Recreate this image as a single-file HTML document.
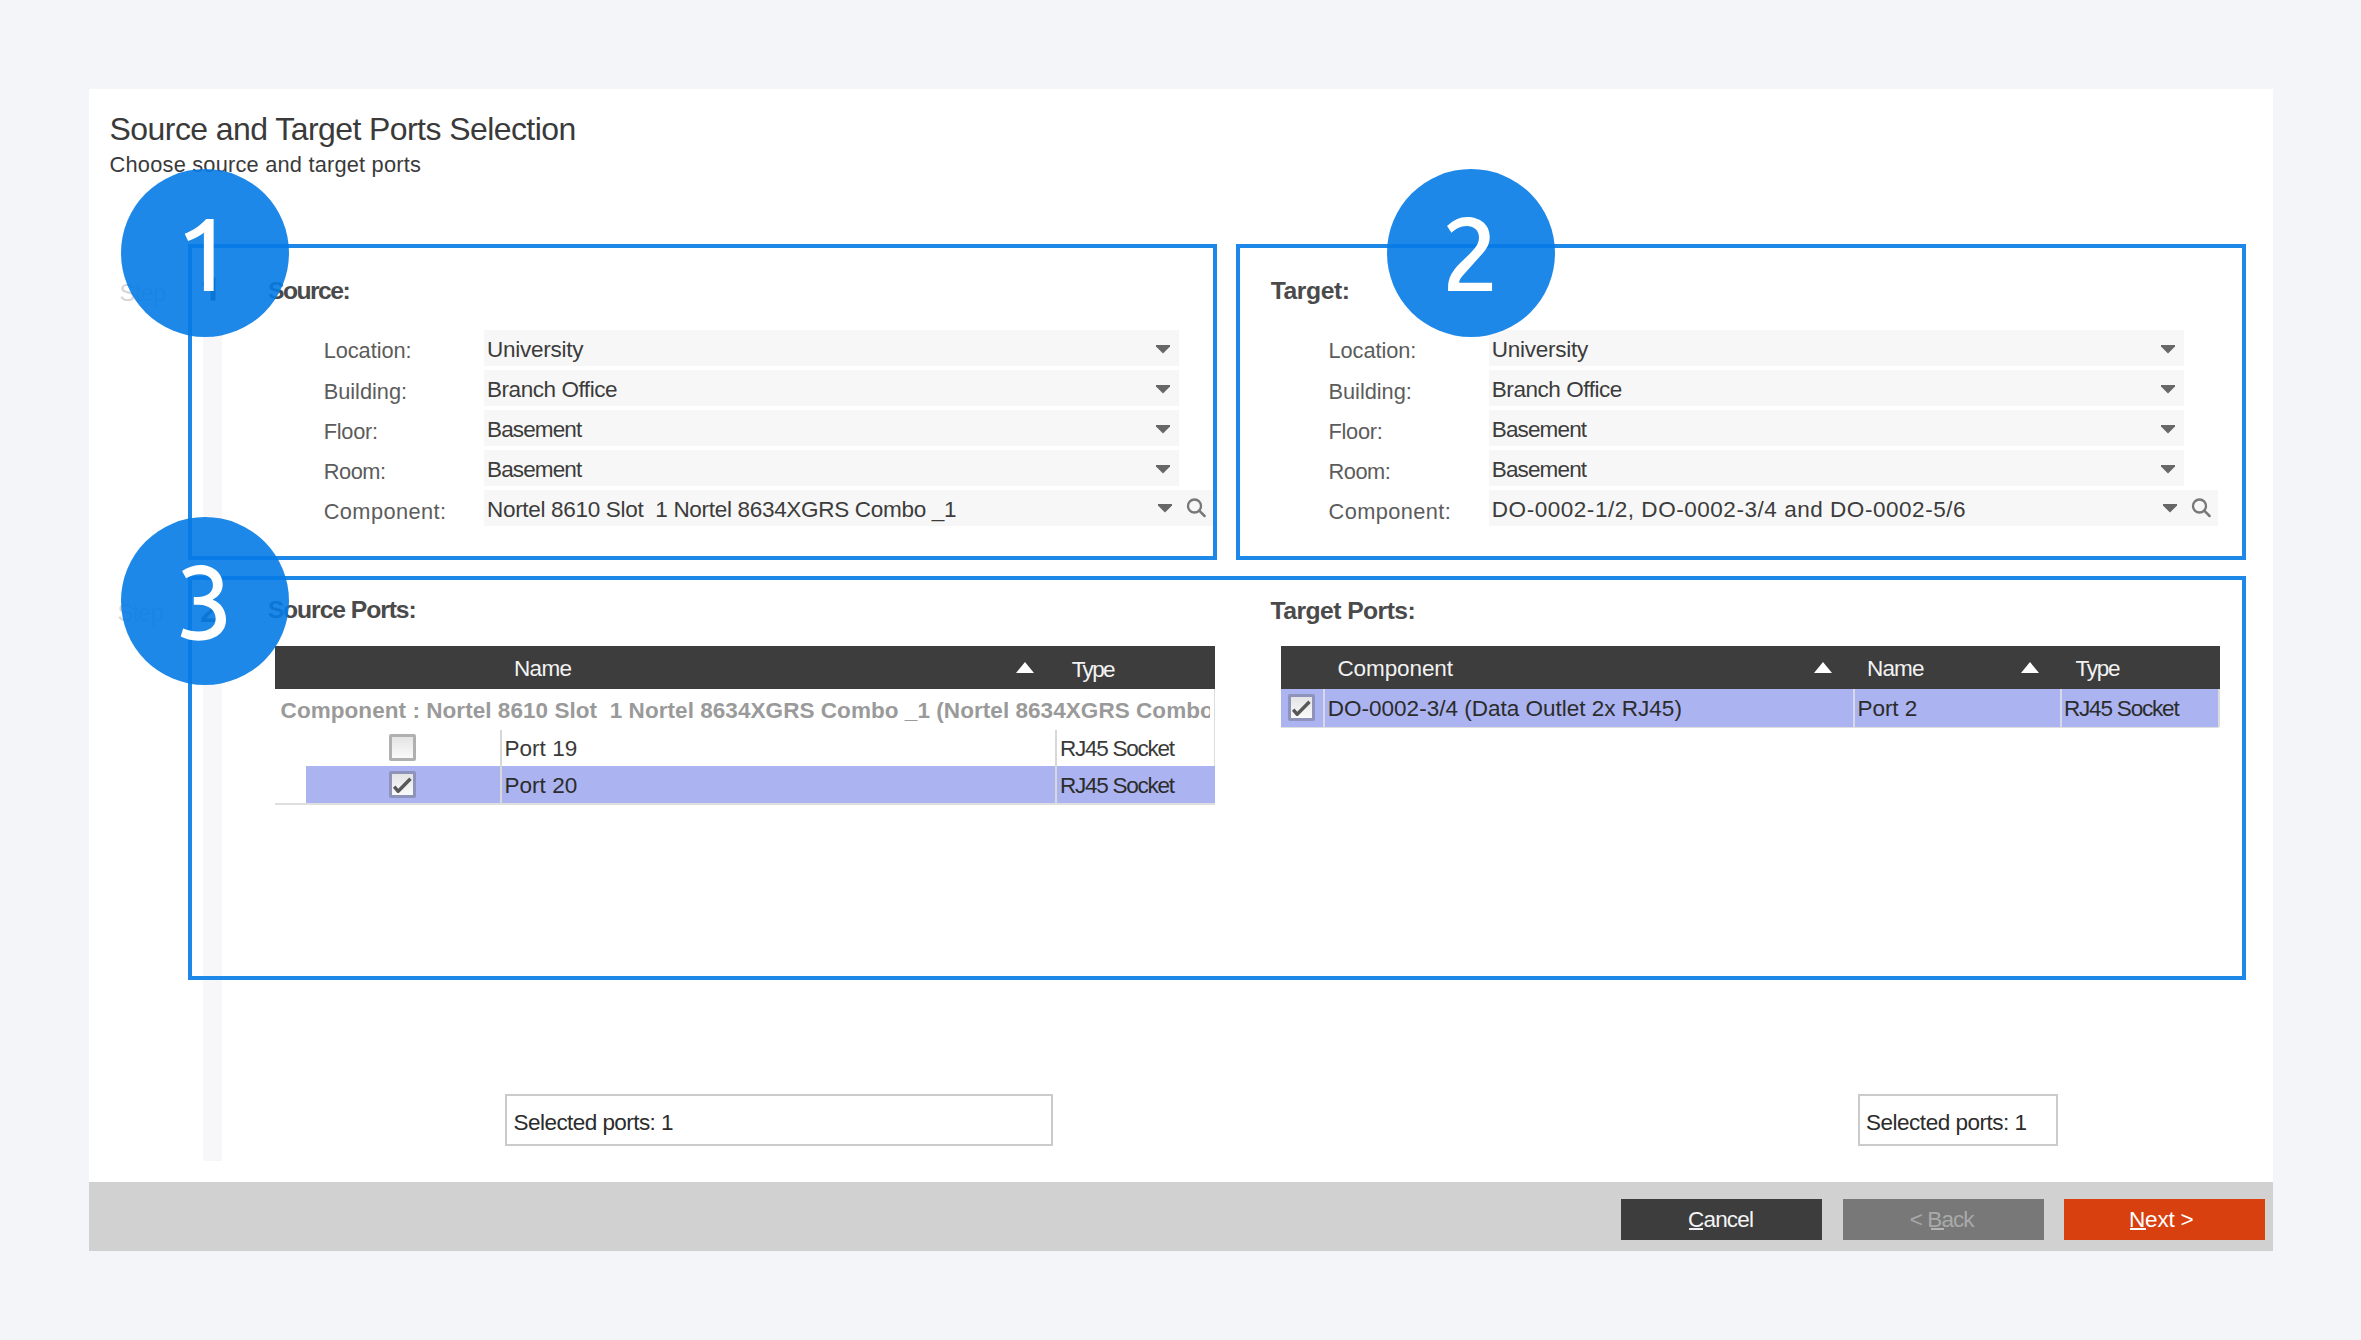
<!DOCTYPE html>
<html><head><meta charset="utf-8"><style>
html,body{margin:0;padding:0;}
body{width:2361px;height:1340px;background:#f4f5f9;position:relative;overflow:hidden;font-family:"Liberation Sans",sans-serif;}
.a{position:absolute;}
.t{position:absolute;white-space:pre;line-height:1;font-family:"Liberation Sans",sans-serif;}
.dd{position:absolute;background:#f7f7f7;height:36px;}
.cb{position:absolute;width:21px;height:21px;border:3px solid #b0b0b0;border-radius:2px;background:linear-gradient(#e4e4e4,#fafafa);}
.box{position:absolute;border:4px solid #1e88e8;box-sizing:border-box;}
.circ{position:absolute;width:168px;height:168px;border-radius:50%;background:rgba(5,123,229,0.9);}
.btn{position:absolute;top:1199px;height:41px;width:201px;}
</style></head><body>
<div class="a" style="left:89px;top:89px;width:2184px;height:1162px;background:#fff;"></div>
<div class="a" style="left:89px;top:1182px;width:2184px;height:69px;background:#d1d1d1;"></div>
<div class="a" style="left:203px;top:265px;width:19px;height:896px;background:#f7f7f9;"></div>
<div class="dd" style="left:483.5px;top:330px;width:695px;height:36px;"></div>
<svg class="a" style="left:1156.3px;top:345px" width="14" height="9"><path d="M0 0H14V1.6L7 8.6L0 1.6Z" fill="#676767"/></svg>
<div class="dd" style="left:483.5px;top:370px;width:695px;height:36px;"></div>
<svg class="a" style="left:1156.3px;top:385px" width="14" height="9"><path d="M0 0H14V1.6L7 8.6L0 1.6Z" fill="#676767"/></svg>
<div class="dd" style="left:483.5px;top:410px;width:695px;height:36px;"></div>
<svg class="a" style="left:1156.3px;top:425px" width="14" height="9"><path d="M0 0H14V1.6L7 8.6L0 1.6Z" fill="#676767"/></svg>
<div class="dd" style="left:483.5px;top:450px;width:695px;height:36px;"></div>
<svg class="a" style="left:1156.3px;top:465px" width="14" height="9"><path d="M0 0H14V1.6L7 8.6L0 1.6Z" fill="#676767"/></svg>
<div class="dd" style="left:483.5px;top:490px;width:729px;height:35.6px;"></div>
<svg class="a" style="left:1157.6px;top:504px" width="14" height="9"><path d="M0 0H14V1.6L7 8.6L0 1.6Z" fill="#676767"/></svg>
<svg class="a" style="left:1184px;top:496px" width="24" height="24"><circle cx="10.5" cy="10" r="6.5" fill="none" stroke="#787878" stroke-width="2.3"/><path d="M15.2 14.7L20.6 20" stroke="#787878" stroke-width="2.5" stroke-linecap="round"/></svg>
<div class="dd" style="left:1488.5px;top:330px;width:695px;height:36px;"></div>
<svg class="a" style="left:2161.3px;top:345px" width="14" height="9"><path d="M0 0H14V1.6L7 8.6L0 1.6Z" fill="#676767"/></svg>
<div class="dd" style="left:1488.5px;top:370px;width:695px;height:36px;"></div>
<svg class="a" style="left:2161.3px;top:385px" width="14" height="9"><path d="M0 0H14V1.6L7 8.6L0 1.6Z" fill="#676767"/></svg>
<div class="dd" style="left:1488.5px;top:410px;width:695px;height:36px;"></div>
<svg class="a" style="left:2161.3px;top:425px" width="14" height="9"><path d="M0 0H14V1.6L7 8.6L0 1.6Z" fill="#676767"/></svg>
<div class="dd" style="left:1488.5px;top:450px;width:695px;height:36px;"></div>
<svg class="a" style="left:2161.3px;top:465px" width="14" height="9"><path d="M0 0H14V1.6L7 8.6L0 1.6Z" fill="#676767"/></svg>
<div class="dd" style="left:1488.5px;top:490px;width:729px;height:35.6px;"></div>
<svg class="a" style="left:2162.6px;top:504px" width="14" height="9"><path d="M0 0H14V1.6L7 8.6L0 1.6Z" fill="#676767"/></svg>
<svg class="a" style="left:2189px;top:496px" width="24" height="24"><circle cx="10.5" cy="10" r="6.5" fill="none" stroke="#787878" stroke-width="2.3"/><path d="M15.2 14.7L20.6 20" stroke="#787878" stroke-width="2.5" stroke-linecap="round"/></svg>
<div class="a" style="left:275px;top:646px;width:940px;height:43px;background:#3d3d3d;"></div>
<div class="a" style="left:1281px;top:646px;width:938.5px;height:43px;background:#3d3d3d;"></div>
<svg class="a" style="left:1016px;top:662px" width="18" height="11"><path d="M9 0L18 11H0Z" fill="#fff"/></svg>
<svg class="a" style="left:1814px;top:662px" width="18" height="11"><path d="M9 0L18 11H0Z" fill="#fff"/></svg>
<svg class="a" style="left:2021px;top:662px" width="18" height="11"><path d="M9 0L18 11H0Z" fill="#fff"/></svg>
<div class="a" style="left:1214px;top:689px;width:1px;height:114px;background:#dcdcdc;"></div>
<div class="a" style="left:305.5px;top:766px;width:909px;height:37px;background:#abb3f0;"></div>
<div class="a" style="left:275px;top:803px;width:940px;height:1.5px;background:#dedede;"></div>
<div class="a" style="left:500px;top:730px;width:1.5px;height:73px;background:#d8d8d8;"></div>
<div class="a" style="left:1055px;top:730px;width:1.5px;height:73px;background:#d8d8d8;"></div>
<div class="cb" style="left:389px;top:734px;"></div>
<div class="cb" style="left:389px;top:771px;border-color:#8e93bb;"></div>
<svg class="a" style="left:389px;top:771px" width="27" height="27"><path d="M5.2 15.6L9.2 20.3L21.5 7.8" fill="none" stroke="#585858" stroke-width="3.4" stroke-linejoin="round"/></svg>
<div class="a" style="left:1281px;top:689px;width:937.5px;height:37.5px;background:#abb3f0;"></div>
<div class="a" style="left:1281px;top:726.5px;width:938px;height:1.5px;background:#dedede;"></div>
<div class="a" style="left:1323px;top:689px;width:1.5px;height:38px;background:#d8d8e8;"></div>
<div class="a" style="left:1853px;top:689px;width:1.5px;height:38px;background:#d8d8e8;"></div>
<div class="a" style="left:2060px;top:689px;width:1.5px;height:38px;background:#d8d8e8;"></div>
<div class="a" style="left:2218px;top:689px;width:1.5px;height:38px;background:#dcdcdc;"></div>
<div class="cb" style="left:1288px;top:694px;border-color:#8e93bb;"></div>
<svg class="a" style="left:1288px;top:694px" width="27" height="27"><path d="M5.2 15.6L9.2 20.3L21.5 7.8" fill="none" stroke="#585858" stroke-width="3.4" stroke-linejoin="round"/></svg>
<div class="a" style="left:505px;top:1094px;width:548px;height:52px;border:2px solid #cbcbcb;box-sizing:border-box;background:#fff;"></div>
<div class="a" style="left:1858px;top:1094px;width:199.5px;height:52px;border:2px solid #cbcbcb;box-sizing:border-box;background:#fff;"></div>
<div class="btn" style="left:1621px;background:#3d3d3d;"></div>
<div class="btn" style="left:1843px;background:#787878;"></div>
<div class="btn" style="left:2064px;background:#d9400f;"></div>
<svg class="a" style="left:200px;top:275px" width="20" height="28"><path d="M10.5 2.5H15.5V25.5H10.5V8L3.5 11.5L2.5 7.5Z" fill="#4a4a4a"/></svg>
<div class="t" style="left:109.60px;top:113.00px;font-size:31.98px;letter-spacing:-0.561px;color:#3a3a3a;">Source and Target Ports Selection</div>
<div class="t" style="left:109.60px;top:154.30px;font-size:21.8px;letter-spacing:0.206px;color:#3a3a3a;">Choose source and target ports</div>
<div class="t" style="left:119.60px;top:280.50px;font-size:23.98px;letter-spacing:-0.859px;color:#d6d6d6;">Step</div>
<div class="t" style="left:117.60px;top:601.00px;font-size:23.98px;letter-spacing:-1.059px;color:#d6d6d6;">Step</div>
<div class="t" style="left:200.00px;top:595.00px;font-size:31.98px;letter-spacing:0.000px;color:#4a4a4a;font-weight:bold;">2</div>
<div class="t" style="left:268.00px;top:279.10px;font-size:24.71px;letter-spacing:-1.558px;color:#4a4a4a;font-weight:bold;">Source:</div>
<div class="t" style="left:1270.80px;top:279.10px;font-size:24.71px;letter-spacing:-0.460px;color:#4a4a4a;font-weight:bold;">Target:</div>
<div class="t" style="left:323.70px;top:340.40px;font-size:21.8px;letter-spacing:-0.076px;color:#5c5c5c;">Location:</div>
<div class="t" style="left:487.00px;top:339.00px;font-size:22.53px;letter-spacing:-0.253px;color:#3c3c3c;">University</div>
<div class="t" style="left:323.70px;top:381.00px;font-size:21.8px;letter-spacing:-0.032px;color:#5c5c5c;">Building:</div>
<div class="t" style="left:487.00px;top:379.00px;font-size:22.53px;letter-spacing:-0.456px;color:#3c3c3c;">Branch Office</div>
<div class="t" style="left:323.70px;top:420.70px;font-size:21.8px;letter-spacing:-0.272px;color:#5c5c5c;">Floor:</div>
<div class="t" style="left:487.00px;top:419.00px;font-size:22.53px;letter-spacing:-0.874px;color:#3c3c3c;">Basement</div>
<div class="t" style="left:323.70px;top:460.50px;font-size:21.8px;letter-spacing:-0.461px;color:#5c5c5c;">Room:</div>
<div class="t" style="left:487.00px;top:459.00px;font-size:22.53px;letter-spacing:-0.874px;color:#3c3c3c;">Basement</div>
<div class="t" style="left:323.70px;top:500.80px;font-size:21.8px;letter-spacing:0.390px;color:#5c5c5c;">Component:</div>
<div class="t" style="left:487.00px;top:499.00px;font-size:22.53px;letter-spacing:-0.316px;color:#3c3c3c;">Nortel 8610 Slot  1 Nortel 8634XGRS Combo _1</div>
<div class="t" style="left:1328.50px;top:340.40px;font-size:21.8px;letter-spacing:-0.076px;color:#5c5c5c;">Location:</div>
<div class="t" style="left:1491.80px;top:339.00px;font-size:22.53px;letter-spacing:-0.253px;color:#3c3c3c;">University</div>
<div class="t" style="left:1328.50px;top:381.00px;font-size:21.8px;letter-spacing:-0.032px;color:#5c5c5c;">Building:</div>
<div class="t" style="left:1491.80px;top:379.00px;font-size:22.53px;letter-spacing:-0.456px;color:#3c3c3c;">Branch Office</div>
<div class="t" style="left:1328.50px;top:420.70px;font-size:21.8px;letter-spacing:-0.272px;color:#5c5c5c;">Floor:</div>
<div class="t" style="left:1491.80px;top:419.00px;font-size:22.53px;letter-spacing:-0.874px;color:#3c3c3c;">Basement</div>
<div class="t" style="left:1328.50px;top:460.50px;font-size:21.8px;letter-spacing:-0.461px;color:#5c5c5c;">Room:</div>
<div class="t" style="left:1491.80px;top:459.00px;font-size:22.53px;letter-spacing:-0.874px;color:#3c3c3c;">Basement</div>
<div class="t" style="left:1328.50px;top:500.80px;font-size:21.8px;letter-spacing:0.390px;color:#5c5c5c;">Component:</div>
<div class="t" style="left:1491.80px;top:499.00px;font-size:22.53px;letter-spacing:0.530px;color:#3c3c3c;">DO-0002-1/2, DO-0002-3/4 and DO-0002-5/6</div>
<div class="t" style="left:267.70px;top:598.40px;font-size:24.71px;letter-spacing:-1.080px;color:#4a4a4a;font-weight:bold;">Source Ports:</div>
<div class="t" style="left:1270.60px;top:598.60px;font-size:24.71px;letter-spacing:-0.564px;color:#4a4a4a;font-weight:bold;">Target Ports:</div>
<div class="t" style="left:513.90px;top:657.80px;font-size:22.53px;letter-spacing:-0.646px;color:#f2f2f2;">Name</div>
<div class="t" style="left:1071.70px;top:658.50px;font-size:22.53px;letter-spacing:-1.663px;color:#f2f2f2;">Type</div>
<div class="t" style="left:1337.40px;top:657.80px;font-size:22.53px;letter-spacing:-0.094px;color:#f2f2f2;">Component</div>
<div class="t" style="left:1867.00px;top:657.50px;font-size:22.53px;letter-spacing:-0.846px;color:#f2f2f2;">Name</div>
<div class="t" style="left:2075.50px;top:658.00px;font-size:22.53px;letter-spacing:-1.263px;color:#f2f2f2;">Type</div>
<div class="t" style="left:504.40px;top:737.60px;font-size:22.53px;letter-spacing:0.038px;color:#3a3a3a;">Port 19</div>
<div class="t" style="left:504.40px;top:774.50px;font-size:22.53px;letter-spacing:0.038px;color:#2c2c2c;">Port 20</div>
<div class="t" style="left:1060.00px;top:737.80px;font-size:22.53px;letter-spacing:-1.260px;color:#3a3a3a;">RJ45 Socket</div>
<div class="t" style="left:1060.00px;top:774.50px;font-size:22.53px;letter-spacing:-1.260px;color:#2c2c2c;">RJ45 Socket</div>
<div class="t" style="left:1327.80px;top:698.00px;font-size:22.53px;letter-spacing:-0.002px;color:#2c2c2c;">DO-0002-3/4 (Data Outlet 2x RJ45)</div>
<div class="t" style="left:1857.50px;top:697.80px;font-size:22.53px;letter-spacing:-0.070px;color:#2c2c2c;">Port 2</div>
<div class="t" style="left:2064.00px;top:698.00px;font-size:22.53px;letter-spacing:-1.200px;color:#2c2c2c;">RJ45 Socket</div>
<div class="t" style="left:513.60px;top:1111.70px;font-size:22.53px;letter-spacing:-0.565px;color:#2c2c2c;">Selected ports: 1</div>
<div class="t" style="left:1866.00px;top:1111.50px;font-size:22.53px;letter-spacing:-0.490px;color:#2c2c2c;">Selected ports: 1</div>
<div class="t" style="left:1688.00px;top:1209.00px;font-size:22.53px;letter-spacing:-0.817px;color:#f4f4f4;">Cancel</div>
<div class="t" style="left:1909.80px;top:1209.00px;font-size:22.53px;letter-spacing:-0.940px;color:#a9a9a9;">&lt; Back</div>
<div class="t" style="left:2129.00px;top:1209.00px;font-size:22.53px;letter-spacing:-0.190px;color:#ffffff;">Next ></div>
<div class="a" style="left:275px;top:689px;width:934.5px;height:41px;overflow:hidden;"><div class="t" style="left:5.60px;top:10.90px;font-size:22.53px;letter-spacing:0.046px;font-weight:bold;color:#9a9a9a;">Component : Nortel 8610 Slot  1 Nortel 8634XGRS Combo _1 (Nortel 8634XGRS Combo _1)</div></div>
<div class="a" style="left:1689px;top:1228px;width:14px;height:2px;background:#f0f0f0;"></div>
<div class="a" style="left:1931px;top:1228px;width:13px;height:2px;background:#b4b4b4;"></div>
<div class="a" style="left:2130px;top:1228px;width:15.5px;height:2px;background:#fff;"></div>
<div class="box" style="left:188px;top:244px;width:1029px;height:316px;"></div>
<div class="box" style="left:1236px;top:244px;width:1010px;height:316px;"></div>
<div class="box" style="left:188px;top:576px;width:2058px;height:404px;"></div>
<div class="circ" style="left:121px;top:169px;"></div>
<div class="circ" style="left:1387px;top:169px;"></div>
<div class="circ" style="left:121px;top:516.5px;"></div>
<svg class="a" style="left:175px;top:210px" width="60" height="90" viewBox="0 0 893 1340"><path d="M465,135 L575,135 L575,1205 L430,1205 L430,340 C350,400 270,440 195,460 L145,355 C260,310 380,230 465,135 Z" fill="#fff"/></svg>
<svg class="a" style="left:1440px;top:210px" width="60" height="90" viewBox="0 0 893 1340"><path d="M105,240 C200,150 300,105 400,105 C600,105 740,220 740,400 C740,500 700,575 640,640 L340,975 C305,1015 285,1050 285,1085 L775,1085 L775,1205 L120,1205 L120,1150 C120,1010 190,900 300,790 L450,645 C540,555 580,490 580,410 C580,300 500,240 400,240 C300,240 230,290 170,340 Z" fill="#fff"/></svg>
<svg class="a" style="left:175px;top:555px" width="60" height="90" viewBox="0 0 893 1340"><path d="M105,240 C190,185 280,150 370,150 C570,150 710,270 710,440 C710,540 650,620 560,665 C680,710 760,820 760,960 C760,1150 600,1275 350,1275 C240,1275 150,1250 85,1215 L120,1095 C190,1125 270,1140 350,1140 C500,1140 605,1070 605,950 C605,810 490,740 350,740 L280,740 L280,625 L345,625 C480,625 565,550 565,450 C565,345 490,285 370,285 C290,285 220,310 165,345 Z" fill="#fff"/></svg>
</body></html>
